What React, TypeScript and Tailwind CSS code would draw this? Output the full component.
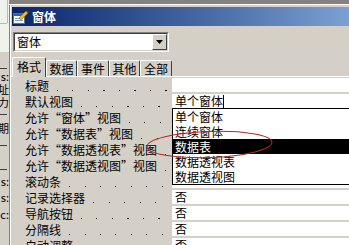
import React from "react";

// rows 2-6 sit under the open list, so their values are left blank
const rows = [
  { label: "标题", value: "" },
  { label: "默认视图", value: "单个窗体", caret: true },
  { label: "允许“窗体”视图", value: "" },
  { label: "允许“数据表”视图", value: "" },
  { label: "允许“数据透视表”视图", value: "" },
  { label: "允许“数据透视图”视图", value: "" },
  { label: "滚动条", value: "" },
  { label: "记录选择器", value: "否" },
  { label: "导航按钮", value: "否" },
  { label: "分隔线", value: "否" },
  { label: "自动调整", value: "否" },
];

const listItems = ["单个窗体", "连续窗体", "数据表", "数据透视表", "数据透视图"];

const tabs = [
  { label: "格式", w: "w-[34px]", active: true },
  { label: "数据", w: "w-[31px]" },
  { label: "事件", w: "w-[32px]" },
  { label: "其他", w: "w-[31px]" },
  { label: "全部", w: "w-[32px]" },
];

// bits of the form design view that peek out on the left
function BackStrip() {
  const Line = () => <div className="h-px bg-[#404040] mr-[2px] shrink-0" />;
  const Gap = ({ h }: { h: string }) => <div className={`${h} shrink-0`} />;
  const Frag = ({ t }: { t: string }) => (
    <div className="h-[13px] leading-[13px] flex justify-end whitespace-nowrap overflow-hidden text-[11px] shrink-0">
      {t}
    </div>
  );
  return (
    <div className="w-[9px] shrink-0 flex flex-col overflow-hidden">
      <div className="h-[52px] bg-[#eef4ec] flex shrink-0">
        <div className="w-[7px] flex flex-col">
          <div className="h-[23px]" />
          <div className="h-px bg-[#b4bcb4]" />
        </div>
        <div className="w-px h-[23px] bg-[#b4bcb4]" />
      </div>
      <div className="flex-1 bg-[#d4d0c8] flex flex-col">
        <Gap h="h-[16px]" />
        <Line />
        <Gap h="h-[1px]" />
        <Frag t="s:" />
        <Frag t="址" />
        <Frag t="力" />
        <Gap h="h-[5px]" />
        <Line />
        <Gap h="h-[7px]" />
        <Frag t="期" />
        <Gap h="h-[10px]" />
        <Line />
        <Gap h="h-[23px]" />
        <Line />
        <Gap h="h-[5px]" />
        <Frag t="s:" />
        <Gap h="h-[3px]" />
        <Frag t="s:" />
        <Gap h="h-[4px]" />
        <Frag t="c:" />
      </div>
    </div>
  );
}

function FormIcon() {
  return (
    <svg width="16" height="15" viewBox="0 0 16 15">
      <rect x="0.5" y="4.5" width="11" height="10" fill="#ffffff" stroke="#5a6e98" />
      <rect x="1" y="5" width="10" height="2" fill="#3a5aa8" />
      <line x1="2" y1="9.5" x2="10" y2="9.5" stroke="#8aa0c8" />
      <line x1="2" y1="11.5" x2="10" y2="11.5" stroke="#8aa0c8" />
      <path d="M6 9 L13 2 L15 4 L8 11 Z" fill="#f0c020" stroke="#8a6a10" strokeWidth="0.6" />
      <path d="M13 2 L14 1 L16 3 L15 4 Z" fill="#404040" />
    </svg>
  );
}

function ComboBox() {
  return (
    <div className="ml-[2px] w-[156px] h-[20px] border border-t-[#808080] border-l-[#808080] border-b-white border-r-white">
      <div className="h-full border border-t-[#404040] border-l-[#404040] border-b-[#d4d0c8] border-r-[#d4d0c8] bg-white flex">
        <span className="flex-1 pl-[2px] text-[12px] leading-[16px]">窗体</span>
        <div className="w-[15px] h-full bg-[#d4d0c8] border border-t-white border-l-white border-b-[#404040] border-r-[#404040] flex items-center justify-center">
          <svg width="7" height="4" viewBox="0 0 7 4">
            <path d="M0 0 H7 L3.5 4 Z" fill="#000" />
          </svg>
        </div>
      </div>
    </div>
  );
}

function PropertyRow({ label, value, caret }: { label: string; value: string; caret?: boolean }) {
  return (
    <div className="flex h-[16px] shrink-0">
      <div className="w-[161px] shrink-0 flex pl-[14px] pr-[4px]">
        <span className="leading-[16px] whitespace-nowrap">{label}</span>
        <div className="flex-1 self-end mb-[3px] ml-[8px] h-px bg-[repeating-linear-gradient(to_right,#000_0_1px,transparent_1px_15.5px)]" />
      </div>
      <div className="flex-1 flex flex-col">
        <div className="h-[14px] bg-white flex items-center pl-[3px] leading-[14px] whitespace-nowrap">
          {value}
          {caret && <span className="w-px h-[13px] bg-black" />}
        </div>
        <div className="h-[2px] bg-[#d4d0c8]" />
      </div>
    </div>
  );
}

export default function App() {
  return (
    <div className="relative w-[349px] h-[245px] overflow-hidden flex bg-[#d4d0c8] text-black text-[12px] font-['Noto_Sans_CJK_SC',sans-serif]">
      <BackStrip />

      <div className="flex-1 flex flex-col min-w-0">
        <div className="h-[4px] bg-[#858181] shrink-0" />
        <div className="h-px bg-white shrink-0" />

        <div className="flex-1 flex flex-col border-l border-[#808080]">
          <div className="flex-1 flex flex-col border-l border-white">
            {/* title bar */}
            <div className="mt-[2px] ml-px h-[19px] shrink-0 flex items-center bg-linear-to-r from-[#0a246a] to-[#7ba0d2]">
              <div className="ml-px">
                <FormIcon />
              </div>
              <span className="ml-[3px] text-white font-bold leading-[19px]">窗体</span>
            </div>

            <div className="mt-[6px] shrink-0">
              <ComboBox />
            </div>

            {/* tabs */}
            <div className="mt-[5px] ml-px h-[19px] shrink-0 flex items-end">
              {tabs.map((t) =>
                t.active ? (
                  <div
                    key={t.label}
                    className={`${t.w} relative z-10 -mb-px h-[20px] bg-[#d4d0c8] border-t border-l border-white border-r border-r-[#404040] rounded-t-[2px] flex justify-center pt-[1px] leading-[16px]`}
                  >
                    {t.label}
                  </div>
                ) : (
                  <div
                    key={t.label}
                    className={`${t.w} h-[16px] border-t border-l border-white border-r border-r-[#404040] rounded-t-[2px] flex justify-center leading-[16px]`}
                  >
                    {t.label}
                  </div>
                )
              )}
            </div>

            {/* tab page */}
            <div className="flex-1 flex flex-col border-t border-white pt-px">
              {rows.map((r) => (
                <PropertyRow key={r.label} label={r.label} value={r.value} caret={r.caret} />
              ))}
            </div>
          </div>
        </div>
      </div>

      {/* open dropdown list */}
      <div className="absolute left-[172px] top-[108px] -right-[4px] bg-white border-t border-l border-b border-black">
        {listItems.map((it, i) => (
          <div
            key={it}
            className={`h-[15px] leading-[15px] pl-[2px] whitespace-nowrap ${i === 2 ? "bg-black text-white" : ""}`}
          >
            {it}
          </div>
        ))}
      </div>

      {/* hand-drawn red ellipse */}
      <svg className="absolute inset-0 pointer-events-none" width="349" height="245" viewBox="0 0 349 245">
        <ellipse
          cx="209.5"
          cy="144.5"
          rx="62.5"
          ry="13"
          transform="rotate(-2 209.5 144.5)"
          fill="none"
          stroke="#b82828"
          strokeWidth="1"
        />
      </svg>
    </div>
  );
}
